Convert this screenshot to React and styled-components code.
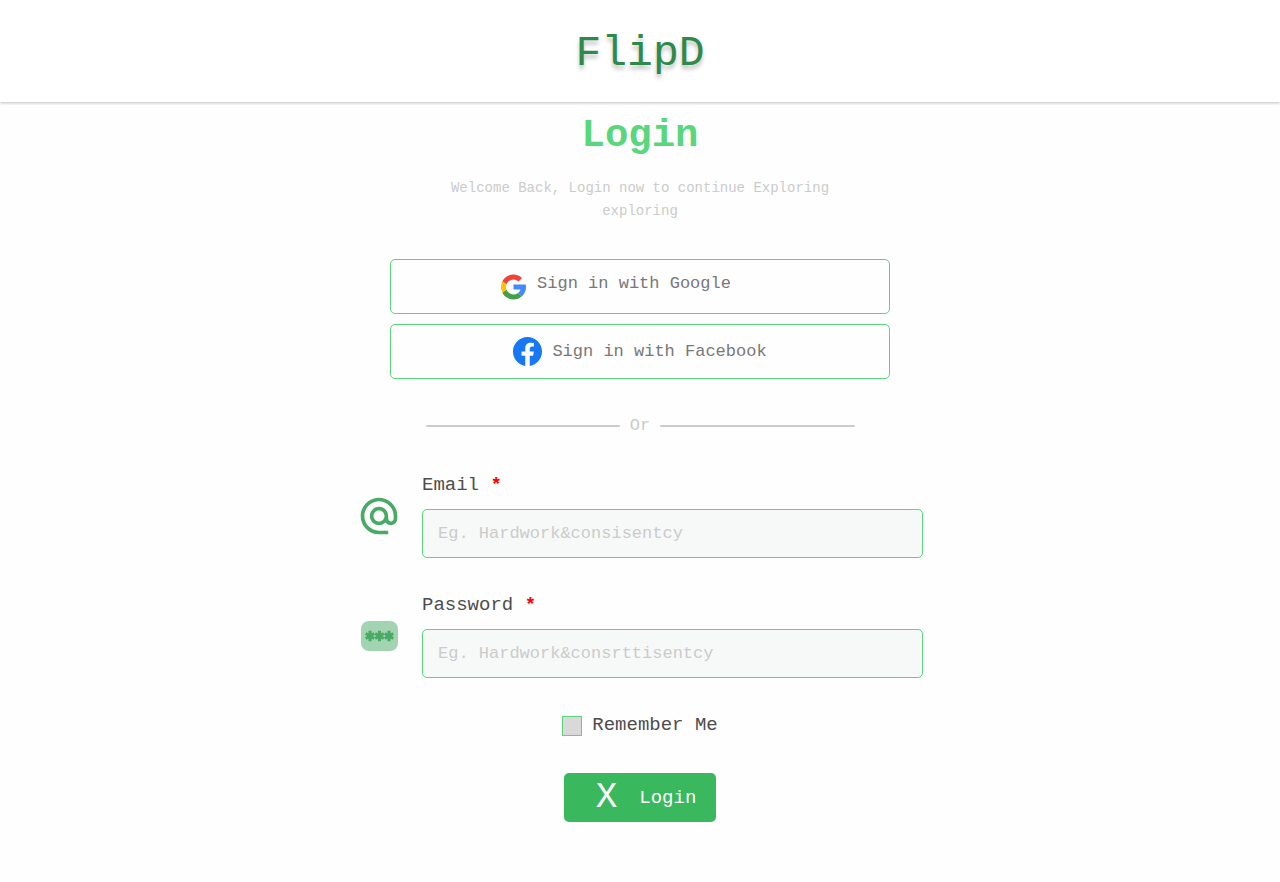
import React from "react";
import styled, { createGlobalStyle } from "styled-components";
import { MdAlternateEmail } from "react-icons/md";

const GlobalStyle = createGlobalStyle`
  *, *::before, *::after { box-sizing: border-box; }
  body {
    margin: 0;
    background: #fefefe;
    color: #4d4d4d;
    font-family: "Liberation Mono", monospace;
  }
  button, input { font: inherit; }
`;

const Header = styled.header`
  display: flex;
  justify-content: center;
  height: 102px;
  padding-top: 29px;
  background: #fff;
  box-shadow: 0 1px 3px rgba(0, 0, 0, 0.25);
`;

const Brand = styled.a`
  color: #2d8a49;
  font-size: 43px;
  line-height: 50px;
  text-decoration: none;
  text-shadow: 0 4px 4px rgba(0, 0, 0, 0.25);
`;

const Main = styled.main`
  display: flex;
  flex-direction: column;
  align-items: center;
  padding: 9px 20px 60px;
`;

const Title = styled.h1`
  margin: 0;
  color: #5ad67d;
  font-size: 39px;
  font-weight: 700;
  line-height: 50px;
`;

const Intro = styled.p`
  max-width: 400px;
  margin: 16px 0 36px;
  color: #cbcbcb;
  font-size: 14px;
  line-height: 23px;
  text-align: center;
`;

const Providers = styled.div`
  display: flex;
  flex-direction: column;
  gap: 10px;
  width: 100%;
  max-width: 500px;
`;

const ProviderButton = styled.button`
  display: flex;
  align-items: center;
  justify-content: center;
  gap: ${(p) => p.$gap || 10}px;
  height: 55px;
  padding: 0 ${(p) => p.$end || 0}px 0 0;
  border: 1px solid #5ad67d;
  border-radius: 5px;
  background: #fefefe;
  color: #787878;
  font-size: 17px;
  line-height: 20px;
  cursor: pointer;
`;

const ProviderLabel = styled.span`
  padding-bottom: ${(p) => p.$lift || 0}px;
`;

const Divider = styled.div`
  display: flex;
  align-items: center;
  gap: 10px;
  width: 100%;
  max-width: 429px;
  margin: 36px 0 38px;
  color: #cbcbcb;
  font-size: 17px;
  line-height: 21px;

  &::before, &::after {
    content: "";
    flex: 1;
    height: 2px;
    border-radius: 1px;
    background: #cbcbcb;
  }
`;

const Form = styled.form`
  display: flex;
  flex-direction: column;
  align-items: center;
  gap: 36px;
  width: 100%;
`;

const Field = styled.div`
  display: flex;
  align-items: center;
  gap: 21px;
  width: 100%;
  max-width: 566px;
`;

const IconSlot = styled.span`
  display: flex;
  flex: none;
  justify-content: center;
  width: 44px;
  color: #48aa65;
`;

const FieldBody = styled.div`
  display: flex;
  flex: 1;
  flex-direction: column;
  gap: 12px;
`;

const Label = styled.label`
  font-size: 19px;
  line-height: 23px;
`;

const Required = styled.span`
  color: #f00;
  font-weight: 700;
`;

const TextInput = styled.input`
  width: 100%;
  height: 49px;
  padding: 0 15px;
  border: 1px solid #5ad67d;
  border-radius: 5px;
  background: #f7f9f8;
  color: #4d4d4d;
  font-size: 17px;

  &::placeholder { color: #cbcbcb; opacity: 1; }
`;

const Remember = styled.div`
  display: flex;
  align-items: center;
  gap: 10px;
`;

const CheckBox = styled.input`
  appearance: none;
  width: 20px;
  height: 20px;
  margin: 0;
  border: 1px solid #5ad67d;
  background: #d9d9d9;

  &:checked { background: #39b85d; }
`;

const SubmitButton = styled.button`
  display: flex;
  align-items: center;
  gap: 22px;
  height: 49px;
  padding: 0 20px 0 32px;
  border: 0;
  border-radius: 5px;
  background: #39b85d;
  color: #fff;
  font-size: 19px;
  cursor: pointer;
`;

const SubmitMark = styled.span`
  font-size: 36px;
  line-height: 40px;
`;

function GoogleLogo() {
  return (
    <svg width="25" height="26" viewBox="4 4 40 40" aria-hidden="true">
      <path fill="#448aff" d="M43.6 20.1H24v8h11.3c-.8 2.2-2.2 4.2-4.1 5.6l6.2 5.2C37 39.2 44 34 44 24c0-1.3-.1-2.7-.4-3.9z" />
      <path fill="#43a047" d="M24 44c5.2 0 9.9-2 13.4-5.2l-6.2-5.2A11.9 11.9 0 0 1 24 36c-5.2 0-9.6-3.3-11.3-7.9l-6.5 5C9.5 39.6 16.2 44 24 44z" />
      <path fill="#ffc107" d="M6.3 14.7A20 20 0 0 0 6.2 33.1l6.5-5a12 12 0 0 1 .2-8.6z" />
      <path fill="#f44336" d="M6.3 14.7l6.6 4.8C14.7 15.1 19 12 24 12c3.1 0 5.8 1.2 8 3.1l5.6-5.7C34 6.1 29.3 4 24 4 16.3 4 9.7 8.3 6.3 14.7z" />
    </svg>
  );
}

function FacebookLogo() {
  return (
    <svg width="29" height="29" viewBox="0 0 24 24" aria-hidden="true">
      <path fill="#1877f2" d="M24 12.073c0-6.627-5.373-12-12-12s-12 5.373-12 12c0 5.99 4.388 10.954 10.125 11.854v-8.385H7.078v-3.47h3.047V9.43c0-3.007 1.792-4.669 4.533-4.669 1.312 0 2.686.235 2.686.235v2.953H15.83c-1.491 0-1.956.925-1.956 1.874v2.25h3.328l-.532 3.47h-2.796v8.385C19.612 23.027 24 18.062 24 12.073z" />
    </svg>
  );
}

function PasswordIcon() {
  return (
    <svg width="37" height="30" viewBox="0 0 37 30" aria-hidden="true">
      <rect width="37" height="30" rx="8" fill="#48aa65" opacity="0.5" />
      <g stroke="#48aa65" strokeWidth="3">
        {[9, 18.5, 28].map((x) => (
          <path key={x} d={`M${x} 9.800v10.400M${x - 4.3} 12.500l8.600 5M${x - 4.3} 17.500l8.600-5`} />
        ))}
      </g>
    </svg>
  );
}

function FormField({ id, label, type, placeholder, icon }) {
  return (
    <Field>
      <IconSlot>{icon}</IconSlot>
      <FieldBody>
        <Label htmlFor={id}>
          {label} <Required>*</Required>
        </Label>
        <TextInput id={id} type={type} placeholder={placeholder} required />
      </FieldBody>
    </Field>
  );
}

export default function App() {
  return (
    <>
      <GlobalStyle />
      <Header>
        <Brand href="#">FlipD</Brand>
      </Header>
      <Main>
        <Title>Login</Title>
        <Intro>Welcome Back, Login now to continue Exploring exploring</Intro>
        <Providers>
          <ProviderButton type="button" $gap={11} $end={48}>
            <GoogleLogo />
            <ProviderLabel $lift={6}>Sign in with Google</ProviderLabel>
          </ProviderButton>
          <ProviderButton type="button">
            <FacebookLogo />
            <ProviderLabel>Sign in with Facebook</ProviderLabel>
          </ProviderButton>
        </Providers>
        <Divider>Or</Divider>
        <Form onSubmit={(e) => e.preventDefault()}>
          <FormField
            id="email"
            label="Email"
            type="email"
            placeholder="Eg. Hardwork&consisentcy"
            icon={<MdAlternateEmail size={44} />}
          />
          <FormField
            id="password"
            label="Password"
            type="password"
            placeholder="Eg. Hardwork&consrttisentcy"
            icon={<PasswordIcon />}
          />
          <Remember>
            <CheckBox id="remember" type="checkbox" />
            <Label htmlFor="remember">Remember Me</Label>
          </Remember>
          <SubmitButton type="submit">
            <SubmitMark aria-hidden="true">X</SubmitMark>
            Login
          </SubmitButton>
        </Form>
      </Main>
    </>
  );
}
